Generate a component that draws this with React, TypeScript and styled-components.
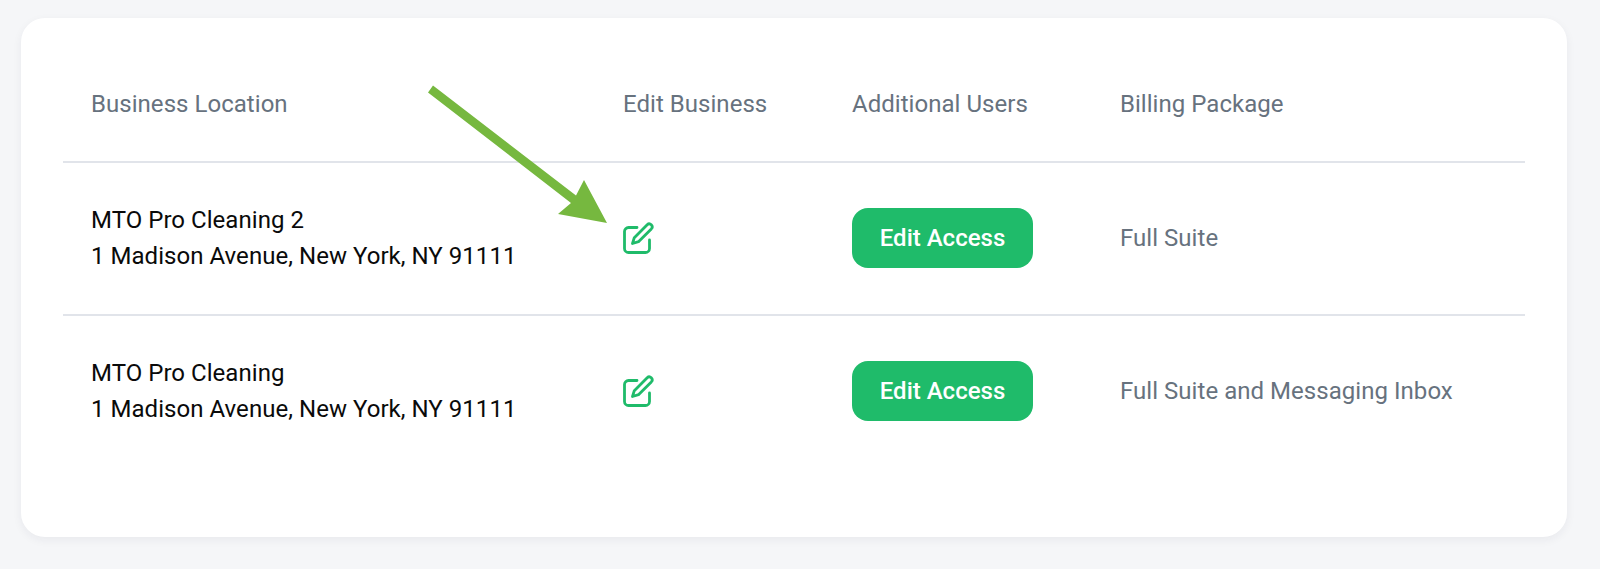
import styled, { createGlobalStyle } from "styled-components"

const locations = [
  { name: "MTO Pro Cleaning 2", address: "1 Madison Avenue, New York, NY 91111", billing: "Full Suite" },
  { name: "MTO Pro Cleaning", address: "1 Madison Avenue, New York, NY 91111", billing: "Full Suite and Messaging Inbox" }
]

function EditIcon() {
  return (
    <svg width="31" height="32" viewBox="0 0 31 32" fill="none" stroke="currentColor" strokeWidth="2.8" strokeLinecap="round" strokeLinejoin="round">
      <path d="M14 5.500 H5.500 A4 4 0 0 0 1.500 9.500 V26.500 A4 4 0 0 0 5.500 30.500 H22.500 A4 4 0 0 0 26.500 26.500 V18" />
      <path d="M24.200 2.800 A2.900 2.900 0 0 1 28.300 6.900 L15.500 19.700 L9.500 21.500 L11.300 15.700 Z" />
    </svg>
  )
}

export default function App() {
  return (
    <Page>
      <GlobalStyle />
      <Card>
        <Table>
          <colgroup>
            <col style={{ width: 532 }} />
            <col style={{ width: 229 }} />
            <col style={{ width: 268 }} />
            <col />
          </colgroup>
          <thead>
            <tr>
              <HeadCell>Business Location</HeadCell>
              <HeadCell>Edit Business</HeadCell>
              <HeadCell>Additional Users</HeadCell>
              <HeadCell>Billing Package</HeadCell>
            </tr>
          </thead>
          <tbody>
            {locations.map((location) => (
              <Row key={location.name}>
                <Cell>
                  <div>{location.name}</div>
                  <div>{location.address}</div>
                </Cell>
                <Cell>
                  <EditLink aria-label="Edit business">
                    <EditIcon />
                  </EditLink>
                </Cell>
                <Cell>
                  <AccessButton>Edit Access</AccessButton>
                </Cell>
                <BillingCell>{location.billing}</BillingCell>
              </Row>
            ))}
          </tbody>
        </Table>
      </Card>
      <Arrow viewBox="0 0 1600 569" aria-hidden="true">
        <path d="M433 85.500 L428 92.500 L571 203 L558 214 L607 223 L584 180 L576 195.500 Z" fill="#76b83f" />
      </Arrow>
    </Page>
  )
}

const GlobalStyle = createGlobalStyle`
  html, body {
    margin: 0;
    background-color: #f5f6f8;
  }
`

const Page = styled.div`
  position: relative;
  box-sizing: border-box;
  width: 1600px;
  height: 569px;
  padding: 18px 33px 32px 21px;
  overflow: hidden;
  font-family: Roboto, "Liberation Sans", sans-serif;
  letter-spacing: 0.04px;
`

const Card = styled.div`
  box-sizing: border-box;
  height: 519px;
  padding: 28px 42px 0 42px;
  background-color: #fff;
  border-radius: 24px;
  box-shadow: 0 3px 10px rgba(30, 40, 60, 0.06);
`

const Table = styled.table`
  width: 100%;
  table-layout: fixed;
  border-collapse: collapse;
`

const HeadCell = styled.th`
  height: 116px;
  padding: 0 28px;
  box-sizing: border-box;
  text-align: left;
  vertical-align: middle;
  font-size: 24px;
  font-weight: 400;
  color: #67727e;
  border-bottom: 2px solid #e1e4ea;
`

const Row = styled.tr`
  height: 153px;

  &:first-child td {
    border-bottom: 2px solid #e1e4ea;
  }
`

const Cell = styled.td`
  padding: 0 28px 2px;
  vertical-align: middle;
  font-size: 24px;
  line-height: 36px;
  color: #0a0a0a;
`

const BillingCell = styled(Cell)`
  color: #67727e;
`

const EditLink = styled.span`
  display: flex;
  color: #1fbb6a;
`

const AccessButton = styled.button`
  display: block;
  width: 181px;
  height: 60px;
  padding: 0;
  border: 0;
  border-radius: 16px;
  background-color: #1fbb6a;
  color: #fff;
  font-family: inherit;
  font-size: 24px;
  font-weight: 500;
`

const Arrow = styled.svg`
  position: absolute;
  top: 0;
  left: 0;
  width: 1600px;
  height: 569px;
  pointer-events: none;
`
